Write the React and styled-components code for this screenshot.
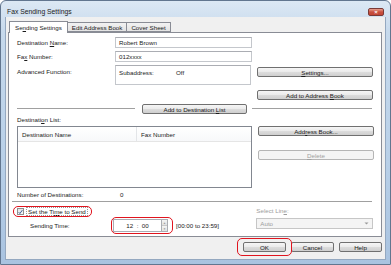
import React from "react";
import styled, { createGlobalStyle } from "styled-components";

const GlobalStyle = createGlobalStyle`
  html, body {
    margin: 0;
    padding: 0;
    background: #ffffff;
  }
  body {
    font-family: "Liberation Sans", Arial, sans-serif;
    font-size: 6.2px;
    color: #1a1a1a;
  }
  u {
    text-decoration-thickness: 0.6px;
    text-underline-offset: 0.8px;
  }
`;

const Window = styled.div`
  width: 391px;
  height: 265px;
  box-sizing: border-box;
  border: 1px solid #62768f;
  border-radius: 6px 6px 0 0;
  background: linear-gradient(#dce8f4, #c6d9ec 12%, #b9d0e8 60%, #a9c3e0);
  padding: 0 4px 4px;
  display: flex;
  flex-direction: column;
`;

const TitleBar = styled.div`
  height: 16px;
  display: flex;
  align-items: center;
  justify-content: space-between;
  padding: 0 2px 0 2px;
`;

const Title = styled.div`
  font-size: 6.8px;
  color: #1b1b1b;
  margin-top: 4px;
`;

const CloseButton = styled.div`
  width: 16px;
  height: 8px;
  margin-top: 5px;
  border: 1px solid #7a3a36;
  box-sizing: border-box;
  border-radius: 2px;
  background: linear-gradient(#e8a08f, #c9503f 50%, #c24636);
  display: flex;
  align-items: center;
  justify-content: center;
  color: #fff;
  font-size: 6px;
  font-weight: bold;
  line-height: 1;
`;

const Client = styled.div`
  flex: 1;
  background: #f0f0f0;
  border: 1px solid #94a8c0;
  border-top: none;
  padding: 4px 3px 0 2px;
  display: flex;
  flex-direction: column;
`;

const TabRow = styled.div`
  display: flex;
  height: 11px;
  padding-left: 1px;
  align-items: flex-end;
`;

const Tab = styled.div`
  height: ${(p) => (p.$active ? "12px" : "10px")};
  margin-bottom: ${(p) => (p.$active ? "-1px" : "0")};
  padding: 0 ${(p) => (p.$active ? "5px" : "4px")};
  box-sizing: border-box;
  border: 1px solid #898c95;
  border-bottom: ${(p) => (p.$active ? "none" : "1px solid #898c95")};
  border-left: ${(p) => (p.$first || p.$active ? "1px solid #898c95" : "none")};
  background: ${(p) => (p.$active ? "#ffffff" : "linear-gradient(#f2f2f2, #e3e3e3)")};
  display: flex;
  align-items: center;
  position: relative;
  z-index: ${(p) => (p.$active ? 1 : 0)};
`;

const Panel = styled.div`
  height: 205px;
  box-sizing: border-box;
  border: 1px solid #898c95;
  background: #ffffff;
  padding: 4px 8px 0 8px;
  display: flex;
  flex-direction: column;
`;

const Row = styled.div`
  display: flex;
  align-items: ${(p) => p.$align || "center"};
  margin-top: ${(p) => p.$mt || 0}px;
  height: ${(p) => (p.$h ? `${p.$h}px` : "auto")};
`;

const Label = styled.div`
  width: ${(p) => p.$w || 98}px;
  flex-shrink: 0;
  color: ${(p) => (p.$disabled ? "#9c9c9c" : "#1a1a1a")};
  padding-top: ${(p) => p.$pt || 0}px;
  white-space: nowrap;
`;

const TextField = styled.div`
  width: 137px;
  height: ${(p) => p.$h || 11}px;
  box-sizing: border-box;
  border: 1px solid #c4c7cc;
  border-top-color: #abadb3;
  background: #fff;
  padding: ${(p) => (p.$pad ? p.$pad : "0 3px")};
  display: flex;
  align-items: ${(p) => (p.$top ? "flex-start" : "center")};
`;

const SubLabel = styled.span`
  width: 57px;
  display: inline-block;
`;

const RightCol = styled.div`
  width: 116px;
  margin-left: 6px;
  display: flex;
  flex-direction: column;
`;

const Button = styled.div`
  width: ${(p) => p.$w || 116}px;
  height: 10px;
  box-sizing: border-box;
  border: 1px solid ${(p) => (p.$disabled ? "#b5b5b5" : "#707070")};
  border-radius: 2px;
  background: ${(p) =>
    p.$disabled
      ? "#f4f4f4"
      : "linear-gradient(#f6f6f6, #ebebeb 45%, #dddddd 50%, #cfcfcf)"};
  color: ${(p) => (p.$disabled ? "#a0a0a0" : "#1a1a1a")};
  display: flex;
  align-items: center;
  justify-content: center;
  margin-top: ${(p) => p.$mt || 0}px;
  margin-left: ${(p) => p.$ml || 0}px;
  flex-shrink: 0;
  white-space: pre;
`;

const Line = styled.div`
  height: 0;
  border-top: 1px solid #a0a0a0;
  border-bottom: 1px solid #ffffff;
  width: ${(p) => (p.$w ? `${p.$w}px` : "auto")};
  flex: ${(p) => (p.$w ? "none" : 1)};
  margin-left: ${(p) => p.$ml || 0}px;
  margin-right: ${(p) => p.$mr || 0}px;
`;

const ListBox = styled.div`
  width: 235px;
  height: 62px;
  box-sizing: border-box;
  border: 1px solid #828790;
  background: #fff;
  flex-shrink: 0;
`;

const ListHeader = styled.div`
  height: 14px;
  display: flex;
  border-bottom: 1px solid #e5e5e5;
  background: linear-gradient(#ffffff, #f7f8fa);
`;

const HeaderCell = styled.div`
  width: ${(p) => p.$w}px;
  padding-left: 4px;
  display: flex;
  align-items: center;
  border-right: ${(p) => (p.$divider ? "1px solid #e3e5e8" : "none")};
  box-sizing: border-box;
  color: #222;
`;

const Lower = styled.div`
  display: flex;
  margin-top: 3px;
`;

const LowerLeft = styled.div`
  width: 240px;
  display: flex;
  flex-direction: column;
`;

const Highlight = styled.div`
  position: relative;
  display: inline-flex;
  align-items: center;
  &::after {
    content: "";
    position: absolute;
    top: ${(p) => p.$t}px;
    bottom: ${(p) => p.$b}px;
    left: ${(p) => p.$l}px;
    right: ${(p) => p.$r}px;
    border: 1.6px solid #e0141e;
    border-radius: 5px;
    pointer-events: none;
  }
`;

const CheckRow = styled.div`
  display: flex;
  align-items: center;
  height: 11px;
`;

const CheckBox = styled.div`
  width: 7px;
  height: 7px;
  box-sizing: border-box;
  border: 1px solid #8f8f8f;
  background: linear-gradient(#e4e4e4, #fafafa);
  display: flex;
  align-items: center;
  justify-content: center;
  margin-right: 3px;
`;

const FocusText = styled.span`
  outline: 1px dotted #9a9a9a;
  outline-offset: 0;
  padding: 0 1px;
`;

const TimeRow = styled.div`
  display: flex;
  align-items: center;
  margin-top: 2px;
  padding-left: 13px;
`;

const TimeBox = styled.div`
  display: flex;
  height: 13px;
`;

const TimeInput = styled.div`
  width: 48px;
  box-sizing: border-box;
  border: 1px solid #abadb3;
  border-right: none;
  background: #fff;
  display: flex;
  align-items: center;
  justify-content: center;
  white-space: pre;
`;

const Spinner = styled.div`
  width: 7px;
  display: flex;
  flex-direction: column;
  border: 1px solid #abadb3;
  box-sizing: border-box;
`;

const SpinHalf = styled.div`
  flex: 1;
  background: linear-gradient(#f5f5f5, #e1e1e1);
  border-bottom: ${(p) => (p.$top ? "1px solid #c8c8c8" : "none")};
  display: flex;
  align-items: center;
  justify-content: center;
  color: #9a9a9a;
  font-size: 3px;
`;

const Range = styled.span`
  margin-left: 8px;
`;

const LowerRight = styled.div`
  width: 117px;
  display: flex;
  flex-direction: column;
`;

const Select = styled.div`
  height: 11px;
  margin-top: 4px;
  box-sizing: border-box;
  border: 1px solid #c6c6c6;
  background: #f4f4f4;
  color: #9c9c9c;
  display: flex;
  align-items: center;
  justify-content: space-between;
  padding: 0 3px;
`;

const Footer = styled.div`
  display: flex;
  justify-content: flex-end;
  gap: 5px;
  margin-top: 5px;
`;

function Check() {
  return (
    <svg width="6" height="6" viewBox="0 0 6 6">
      <path d="M0.8 3.2 L2.3 4.8 L5.2 0.8" fill="none" stroke="#2a4f8f" strokeWidth="1.1" />
    </svg>
  );
}

function Arrow() {
  return (
    <svg width="5" height="3" viewBox="0 0 5 3">
      <path d="M0.5 0.5 L2.5 2.5 L4.5 0.5 Z" fill="#9a9a9a" />
    </svg>
  );
}

export default function App() {
  return (
    <>
      <GlobalStyle />
      <Window>
        <TitleBar>
          <Title>Fax Sending Settings</Title>
          <CloseButton>×</CloseButton>
        </TitleBar>
        <Client>
          <TabRow>
            <Tab $active $first>Se<u>n</u>ding Settings</Tab>
            <Tab>Edit Address Book</Tab>
            <Tab>Cover Sheet</Tab>
          </TabRow>
          <Panel>
            <Row>
              <Label>Destination <u>N</u>ame:</Label>
              <TextField>Robert Brown</TextField>
            </Row>
            <Row $mt={3}>
              <Label>Fa<u>x</u> Number:</Label>
              <TextField>012xxxx</TextField>
            </Row>
            <Row $mt={3} $align="flex-start">
              <Label $pt={3}>Advanced Function:</Label>
              <TextField $h={20} $top $pad="3px 3px">
                <SubLabel>Subaddress:</SubLabel>Off
              </TextField>
              <RightCol>
                <Button $mt={2}><u>S</u>ettings...</Button>
                <Button $mt={13}>{"Add to Address "}<u>B</u>ook</Button>
              </RightCol>
            </Row>
            <Row $mt={4}>
              <Line $w={118} />
              <Button $w={105} $ml={7}>{"Add to Destination "}<u>L</u>ist</Button>
              <Line $ml={5} $mr={1} />
            </Row>
            <Row $mt={2}>
              <Label>Destinati<u>o</u>n List:</Label>
            </Row>
            <Row $mt={3} $align="flex-start">
              <ListBox>
                <ListHeader>
                  <HeaderCell $w={119} $divider>Destination Name</HeaderCell>
                  <HeaderCell $w={110}>Fax Number</HeaderCell>
                </ListHeader>
              </ListBox>
              <RightCol>
                <Button>Add<u>r</u>ess Book...</Button>
                <Button $mt={14} $disabled><u>D</u>elete</Button>
              </RightCol>
            </Row>
            <Row $h={13}>
              <Label $w={103}>Number of Destinations:</Label>
              <span>0</span>
            </Row>
            <Row>
              <Line $ml={-5} $mr={1} />
            </Row>
            <Lower>
              <LowerLeft>
                <CheckRow>
                  <Highlight $t={-2} $b={-2} $l={-4} $r={-5}>
                    <CheckBox>
                      <Check />
                    </CheckBox>
                    <FocusText>{"Set the Ti"}<u>m</u>{"e to Send"}</FocusText>
                  </Highlight>
                </CheckRow>
                <TimeRow>
                  <Label $w={83}>Sending Time:</Label>
                  <Highlight $t={-2} $b={-2} $l={-2} $r={-5}>
                    <TimeBox>
                      <TimeInput>{"12  :  00"}</TimeInput>
                      <Spinner>
                        <SpinHalf $top>▲</SpinHalf>
                        <SpinHalf>▼</SpinHalf>
                      </Spinner>
                    </TimeBox>
                  </Highlight>
                  <Range>[00:00 to 23:59]</Range>
                </TimeRow>
              </LowerLeft>
              <LowerRight>
                <Label $disabled $pt={1}>Select Lin<u>e</u>:</Label>
                <Select>
                  Auto
                  <Arrow />
                </Select>
              </LowerRight>
            </Lower>
          </Panel>
          <Footer>
            <Highlight $t={-4} $b={-4} $l={-6} $r={-6}>
              <Button $w={43}>OK</Button>
            </Highlight>
            <Button $w={43}>Cancel</Button>
            <Button $w={43}>Help</Button>
          </Footer>
        </Client>
      </Window>
    </>
  );
}
